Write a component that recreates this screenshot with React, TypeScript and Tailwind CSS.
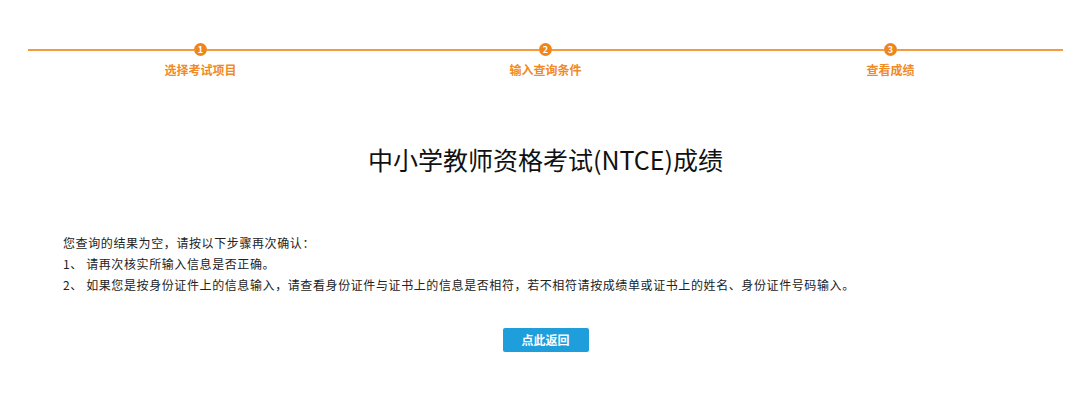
import React from "react";

const steps = ["选择考试项目", "输入查询条件", "查看成绩"];

const font = "font-['Microsoft_YaHei','Noto_Sans_CJK_SC',sans-serif]";

const App: React.FC = () => {
  return (
    <div className={`w-[1080px] h-[408px] bg-white ${font}`}>
      <div className="pl-[28px] pr-[17px]">
        <div className="flex pt-[43px]">
          {steps.map((label, i) => (
            <div key={label} className="flex-1 flex flex-col items-center">
              <div className="w-full flex items-center h-[13px]">
                <div className="flex-1 h-[2px] bg-[#F39B3E]" />
                <div className="w-[13px] h-[13px] rounded-full bg-[#F08519] text-white text-[9px] font-bold leading-[13px] text-center">
                  {i + 1}
                </div>
                <div className="flex-1 h-[2px] bg-[#F39B3E]" />
              </div>
              <div className="mt-[6px] text-[12px] leading-[16px] font-bold text-[#F08A24]">
                {label}
              </div>
            </div>
          ))}
        </div>

        <h1 className="mt-[65px] text-center text-[25px] leading-[32px] text-[#111]">
          中小学教师资格考试(NTCE)成绩
        </h1>

        <div className="mt-[57px] pl-[35px] text-[12px] leading-[21px] tracking-[0.6px] text-[#222]">
          <p>您查询的结果为空，请按以下步骤再次确认：</p>
          <p>1、 请再次核实所输入信息是否正确。</p>
          <p>
            2、 如果您是按身份证件上的信息输入，请查看身份证件与证书上的信息是否相符，若不相符请按成绩单或证书上的姓名、身份证件号码输入。
          </p>
        </div>

        <div className="mt-[33px] flex justify-center">
          <button className="w-[86px] h-[24px] rounded-[2px] bg-[#1E9EDB] text-white text-[12px] font-bold">
            点此返回
          </button>
        </div>
      </div>
    </div>
  );
};

export default App;
